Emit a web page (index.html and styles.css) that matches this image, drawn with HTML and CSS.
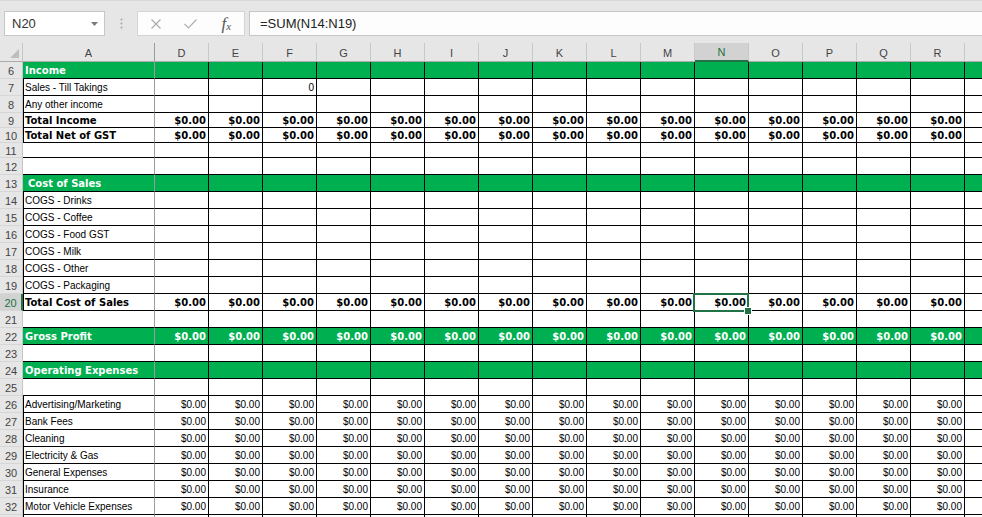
FILE: index.html
```html
<!DOCTYPE html>
<html>
<head>
<meta charset="utf-8">
<link rel="stylesheet" href="styles.css">
</head>
<body>
<div class="top">
  <div class="namebox"><span>N20</span><svg class="caret" width="7" height="4" viewBox="0 0 7 4"><polygon points="0,0 7,0 3.5,4" fill="#7a7a7a"/></svg></div>
  <div class="grip"><svg width="3" height="11" viewBox="0 0 3 11"><circle cx="1.5" cy="1.5" r="1" fill="#a6a6a6"/><circle cx="1.5" cy="5.5" r="1" fill="#a6a6a6"/><circle cx="1.5" cy="9.5" r="1" fill="#a6a6a6"/></svg></div>
  <div class="fbtns">
    <span class="btn"><svg width="10" height="10" viewBox="0 0 10 10"><path d="M0.5 0.5 L9.5 9.5 M9.5 0.5 L0.5 9.5" stroke="#a8a8a8" stroke-width="1.1" fill="none"/></svg></span>
    <span class="btn"><svg width="13" height="10" viewBox="0 0 13 10"><path d="M0.5 5 L4.5 9 L12.5 0.5" stroke="#b0b0b0" stroke-width="1.2" fill="none"/></svg></span>
    <span class="btn fx"><span class="ff">f</span><span class="fxx">x</span></span>
  </div>
  <div class="formula">=SUM(N14:N19)</div>
</div>
<div class="sheet">
  <div class="row hdr"><span class="rh corner"><svg width="9" height="9" viewBox="0 0 9 9"><polygon points="9,0 9,9 0,9" fill="#bdbdbd"/></svg></span><span class="a">A</span><span>D</span><span>E</span><span>F</span><span>G</span><span>H</span><span>I</span><span>J</span><span>K</span><span>L</span><span>M</span><span class="on">N</span><span>O</span><span>P</span><span>Q</span><span>R</span><span></span></div>

  <div class="row g"><span class="rh">6</span><span class="a">Income</span><span></span><span></span><span></span><span></span><span></span><span></span><span></span><span></span><span></span><span></span><span></span><span></span><span></span><span></span><span></span><span></span></div>
  <div class="row"><span class="rh">7</span><span class="a lb">Sales - Till Takings</span><span></span><span></span><span>0</span><span></span><span></span><span></span><span></span><span></span><span></span><span></span><span></span><span></span><span></span><span></span><span></span><span></span></div>
  <div class="row"><span class="rh">8</span><span class="a lb">Any other income</span><span></span><span></span><span></span><span></span><span></span><span></span><span></span><span></span><span></span><span></span><span></span><span></span><span></span><span></span><span></span><span></span></div>
  <div class="row s t"><span class="rh">9</span><span class="a lb">Total Income</span><span>$0.00</span><span>$0.00</span><span>$0.00</span><span>$0.00</span><span>$0.00</span><span>$0.00</span><span>$0.00</span><span>$0.00</span><span>$0.00</span><span>$0.00</span><span>$0.00</span><span>$0.00</span><span>$0.00</span><span>$0.00</span><span>$0.00</span><span></span></div>
  <div class="row s t"><span class="rh">10</span><span class="a lb">Total Net of GST</span><span>$0.00</span><span>$0.00</span><span>$0.00</span><span>$0.00</span><span>$0.00</span><span>$0.00</span><span>$0.00</span><span>$0.00</span><span>$0.00</span><span>$0.00</span><span>$0.00</span><span>$0.00</span><span>$0.00</span><span>$0.00</span><span>$0.00</span><span></span></div>
  <div class="row s"><span class="rh">11</span><span class="a"></span><span></span><span></span><span></span><span></span><span></span><span></span><span></span><span></span><span></span><span></span><span></span><span></span><span></span><span></span><span></span><span></span></div>
  <div class="row"><span class="rh">12</span><span class="a"></span><span></span><span></span><span></span><span></span><span></span><span></span><span></span><span></span><span></span><span></span><span></span><span></span><span></span><span></span><span></span><span></span></div>
  <div class="row g"><span class="rh">13</span><span class="a ind">Cost of Sales</span><span></span><span></span><span></span><span></span><span></span><span></span><span></span><span></span><span></span><span></span><span></span><span></span><span></span><span></span><span></span><span></span></div>
  <div class="row"><span class="rh">14</span><span class="a lb">COGS - Drinks</span><span></span><span></span><span></span><span></span><span></span><span></span><span></span><span></span><span></span><span></span><span></span><span></span><span></span><span></span><span></span><span></span></div>
  <div class="row"><span class="rh">15</span><span class="a lb">COGS - Coffee</span><span></span><span></span><span></span><span></span><span></span><span></span><span></span><span></span><span></span><span></span><span></span><span></span><span></span><span></span><span></span><span></span></div>
  <div class="row"><span class="rh">16</span><span class="a lb">COGS - Food GST</span><span></span><span></span><span></span><span></span><span></span><span></span><span></span><span></span><span></span><span></span><span></span><span></span><span></span><span></span><span></span><span></span></div>
  <div class="row"><span class="rh">17</span><span class="a lb">COGS - Milk</span><span></span><span></span><span></span><span></span><span></span><span></span><span></span><span></span><span></span><span></span><span></span><span></span><span></span><span></span><span></span><span></span></div>
  <div class="row"><span class="rh">18</span><span class="a lb">COGS - Other</span><span></span><span></span><span></span><span></span><span></span><span></span><span></span><span></span><span></span><span></span><span></span><span></span><span></span><span></span><span></span><span></span></div>
  <div class="row"><span class="rh">19</span><span class="a lb">COGS - Packaging</span><span></span><span></span><span></span><span></span><span></span><span></span><span></span><span></span><span></span><span></span><span></span><span></span><span></span><span></span><span></span><span></span></div>
  <div class="row t"><span class="rh on">20</span><span class="a lb">Total Cost of Sales</span><span>$0.00</span><span>$0.00</span><span>$0.00</span><span>$0.00</span><span>$0.00</span><span>$0.00</span><span>$0.00</span><span>$0.00</span><span>$0.00</span><span>$0.00</span><span class="sel">$0.00</span><span>$0.00</span><span>$0.00</span><span>$0.00</span><span>$0.00</span><span></span></div>
  <div class="row"><span class="rh">21</span><span class="a"></span><span></span><span></span><span></span><span></span><span></span><span></span><span></span><span></span><span></span><span></span><span></span><span></span><span></span><span></span><span></span><span></span></div>
  <div class="row g"><span class="rh">22</span><span class="a">Gross Profit</span><span>$0.00</span><span>$0.00</span><span>$0.00</span><span>$0.00</span><span>$0.00</span><span>$0.00</span><span>$0.00</span><span>$0.00</span><span>$0.00</span><span>$0.00</span><span>$0.00</span><span>$0.00</span><span>$0.00</span><span>$0.00</span><span>$0.00</span><span></span></div>
  <div class="row"><span class="rh">23</span><span class="a"></span><span></span><span></span><span></span><span></span><span></span><span></span><span></span><span></span><span></span><span></span><span></span><span></span><span></span><span></span><span></span><span></span></div>
  <div class="row g"><span class="rh">24</span><span class="a">Operating Expenses</span><span></span><span></span><span></span><span></span><span></span><span></span><span></span><span></span><span></span><span></span><span></span><span></span><span></span><span></span><span></span><span></span></div>
  <div class="row"><span class="rh">25</span><span class="a"></span><span></span><span></span><span></span><span></span><span></span><span></span><span></span><span></span><span></span><span></span><span></span><span></span><span></span><span></span><span></span><span></span></div>
  <div class="row"><span class="rh">26</span><span class="a lb">Advertising/Marketing</span><span>$0.00</span><span>$0.00</span><span>$0.00</span><span>$0.00</span><span>$0.00</span><span>$0.00</span><span>$0.00</span><span>$0.00</span><span>$0.00</span><span>$0.00</span><span>$0.00</span><span>$0.00</span><span>$0.00</span><span>$0.00</span><span>$0.00</span><span></span></div>
  <div class="row"><span class="rh">27</span><span class="a lb">Bank Fees</span><span>$0.00</span><span>$0.00</span><span>$0.00</span><span>$0.00</span><span>$0.00</span><span>$0.00</span><span>$0.00</span><span>$0.00</span><span>$0.00</span><span>$0.00</span><span>$0.00</span><span>$0.00</span><span>$0.00</span><span>$0.00</span><span>$0.00</span><span></span></div>
  <div class="row"><span class="rh">28</span><span class="a lb">Cleaning</span><span>$0.00</span><span>$0.00</span><span>$0.00</span><span>$0.00</span><span>$0.00</span><span>$0.00</span><span>$0.00</span><span>$0.00</span><span>$0.00</span><span>$0.00</span><span>$0.00</span><span>$0.00</span><span>$0.00</span><span>$0.00</span><span>$0.00</span><span></span></div>
  <div class="row"><span class="rh">29</span><span class="a lb">Electricity &amp; Gas</span><span>$0.00</span><span>$0.00</span><span>$0.00</span><span>$0.00</span><span>$0.00</span><span>$0.00</span><span>$0.00</span><span>$0.00</span><span>$0.00</span><span>$0.00</span><span>$0.00</span><span>$0.00</span><span>$0.00</span><span>$0.00</span><span>$0.00</span><span></span></div>
  <div class="row"><span class="rh">30</span><span class="a lb">General Expenses</span><span>$0.00</span><span>$0.00</span><span>$0.00</span><span>$0.00</span><span>$0.00</span><span>$0.00</span><span>$0.00</span><span>$0.00</span><span>$0.00</span><span>$0.00</span><span>$0.00</span><span>$0.00</span><span>$0.00</span><span>$0.00</span><span>$0.00</span><span></span></div>
  <div class="row"><span class="rh">31</span><span class="a lb">Insurance</span><span>$0.00</span><span>$0.00</span><span>$0.00</span><span>$0.00</span><span>$0.00</span><span>$0.00</span><span>$0.00</span><span>$0.00</span><span>$0.00</span><span>$0.00</span><span>$0.00</span><span>$0.00</span><span>$0.00</span><span>$0.00</span><span>$0.00</span><span></span></div>
  <div class="row"><span class="rh">32</span><span class="a lb">Motor Vehicle Expenses</span><span>$0.00</span><span>$0.00</span><span>$0.00</span><span>$0.00</span><span>$0.00</span><span>$0.00</span><span>$0.00</span><span>$0.00</span><span>$0.00</span><span>$0.00</span><span>$0.00</span><span>$0.00</span><span>$0.00</span><span>$0.00</span><span>$0.00</span><span></span></div>
  <div class="row"><span class="rh"></span><span class="a lb"></span><span></span><span></span><span></span><span></span><span></span><span></span><span></span><span></span><span></span><span></span><span></span><span></span><span></span><span></span><span></span><span></span></div>
</div>
</body>
</html>
```

FILE: styles.css
```css
* { box-sizing: border-box; margin: 0; padding: 0; }
html, body { width: 982px; height: 517px; overflow: hidden; background: #fff; }
body { font-family: "Liberation Sans", Arial, sans-serif; color: #000; }

.top {
  height: 43px;
  background: #e6e6e6;
  border-top: 1px solid #d9d9d9;
  display: flex;
  align-items: flex-start;
  padding: 10px 0 0 4px;
}
.namebox {
  width: 101px;
  height: 25px;
  background: #fff;
  border: 1px solid #c6c6c6;
  display: flex;
  align-items: center;
  justify-content: space-between;
  padding: 0 6px 0 7px;
  font-size: 13px;
  color: #333;
}
.caret { display: block; }
.grip {
  width: 32px;
  height: 25px;
  display: flex;
  align-items: center;
  justify-content: center;
}
.fbtns {
  width: 108px;
  height: 25px;
  background: #fdfdfd;
  border: 1px solid #d4d4d4;
  display: grid;
  grid-template-columns: repeat(3, 1fr);
  align-items: center;
}
.btn { display: flex; justify-content: center; align-items: center; }
.fx {
  font-family: "Liberation Serif", "Times New Roman", serif;
  font-style: italic;
  color: #555;
  line-height: 1;
  align-items: flex-end;
  height: 14px;
}
.fx .ff { font-size: 17px; line-height: 14px; }
.fx .fxx { font-size: 11px; line-height: 10px; margin-left: 0; }
.formula {
  flex: 1;
  margin-left: 4px;
  height: 25px;
  background: #fdfdfd;
  border: 1px solid #c6c6c6;
  border-right: none;
  padding-left: 10px;
  font-size: 13px;
  line-height: 23px;
  color: #222;
}

.sheet { width: 982px; overflow: hidden; }
.row {
  display: grid;
  grid-template-columns: 23px 132px repeat(16, 54px);
  height: 17px;
  width: 1019px;
}
.row.s { height: 15px; }
.row > span {
  border-right: 1px solid #000;
  border-bottom: 1px solid #000;
  font-size: 10px;
  display: flex;
  align-items: center;
  justify-content: flex-end;
  padding: 1px 2px 0 0;
  white-space: nowrap;
  overflow: hidden;
}
.row > .rh {
  background: #e6e6e6;
  border-right: 1px solid #c6c6c6;
  border-bottom: 1px solid #d6d6d6;
  justify-content: center;
  padding: 1px 0 0 0;
  font-size: 11px;
  color: #444;
}
.row > .rh.on {
  background: #d2d2d2;
  color: #217346;
  border-right: 2px solid #217346;
}
.row > .a {
  border-right-color: #9b9b9b;
  justify-content: flex-start;
  padding: 1px 0 0 2px;
}
.row > .a.lb { border-left: 1px solid #000; padding-left: 1px; }
.row > .a.ind { padding-left: 5px; }

.hdr { height: 19px; }
.hdr > span {
  background: #e6e6e6;
  border-right: 1px solid #c9c9c9;
  border-bottom: 1px solid #ababab;
  justify-content: center;
  padding: 1px 0 0 0;
  font-size: 11px;
  color: #444;
}
.hdr > .rh.corner {
  border-bottom: 1px solid #ababab;
  justify-content: flex-end;
  align-items: flex-end;
  padding: 0 3px 3px 0;
}
.hdr > .a { border-right-color: #9b9b9b; justify-content: center; padding: 1px 0 0 0; }
.hdr > .on {
  background: #d2d2d2;
  color: #217346;
  border-bottom: 2px solid #217346;
}

.t > span:not(.rh) {
  font-family: "DejaVu Sans", Verdana, sans-serif;
  font-weight: bold;
  font-size: 10px;
}
.g > span:not(.rh) {
  background: #00b050;
  color: #fff;
  font-family: "DejaVu Sans", Verdana, sans-serif;
  font-weight: bold;
  font-size: 10px;
}

.row > .sel { position: relative; overflow: visible; }
.sel::before {
  content: "";
  position: absolute;
  left: -2px;
  top: -1px;
  right: -1px;
  bottom: -2px;
  border: 2px solid #217346;
  z-index: 2;
}
.sel::after {
  content: "";
  position: absolute;
  right: -4px;
  bottom: -5px;
  width: 6px;
  height: 6px;
  background: #217346;
  border: 1px solid #fff;
  z-index: 3;
}
```
